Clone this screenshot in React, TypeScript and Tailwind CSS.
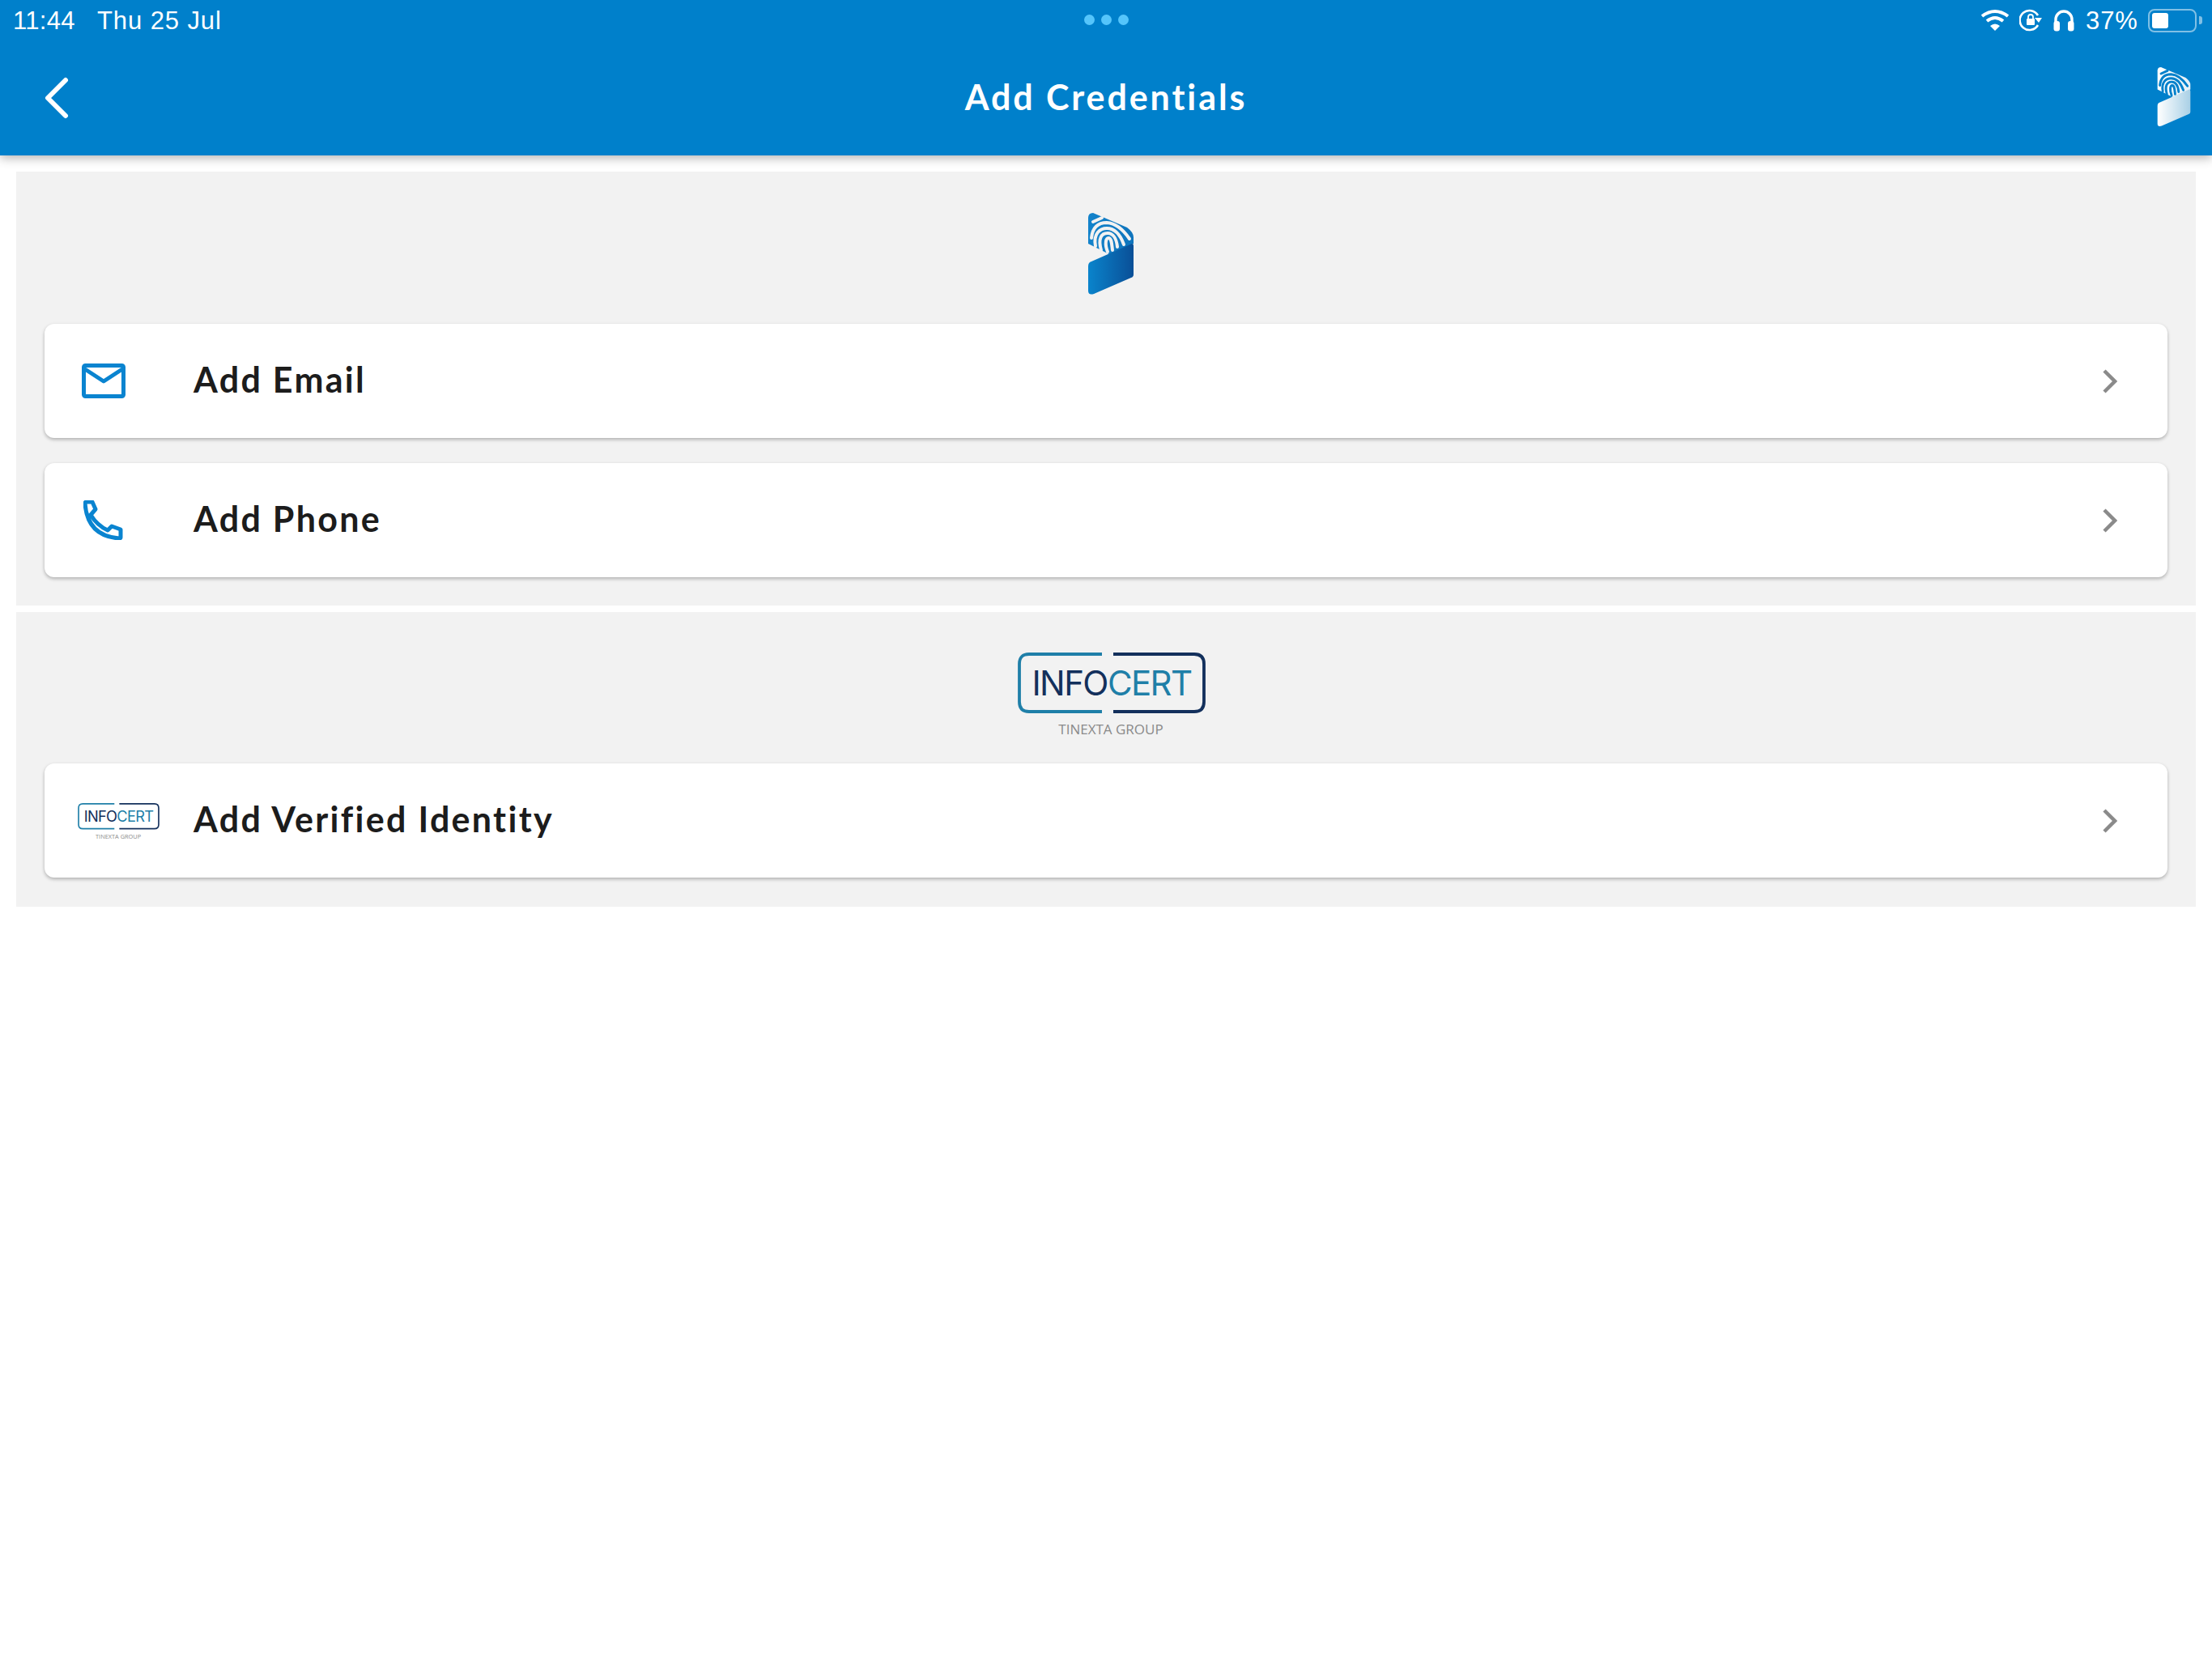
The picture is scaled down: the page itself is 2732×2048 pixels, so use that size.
import React from "react";

function Print({ id, top, bottom, lines, className }: { id: string; top: [string, string]; bottom: [string, string]; lines: string; className: string }) {
  return (
    <svg viewBox="0 0 56 102" className={className}>
      <defs>
        <linearGradient id={id + "a"} x1="0" y1="0" x2="1" y2="0">
          <stop offset="0" stopColor={top[0]} />
          <stop offset="1" stopColor={top[1]} />
        </linearGradient>
        <linearGradient id={id + "b"} x1="0" y1="0" x2="1" y2="0">
          <stop offset="0" stopColor={bottom[0]} />
          <stop offset="1" stopColor={bottom[1]} />
        </linearGradient>
      </defs>
      <path d="M0 6 Q0 0 6 0 L48 18 Q56 24 56 30 V38 L26 51 L0 38 Z" fill={`url(#${id}a)`} />
      <path d="M0 66 Q0 61 4 60 L54 38 Q56 38 56 41 V76 Q56 79 53 80 L7 100 Q0 102 0 96 Z" fill={`url(#${id}b)`} />
      <g fill="none" stroke={lines} strokeWidth="4" strokeLinecap="round">
        <path d="M6 11 L17 6" />
        <path d="M4 31 Q6 12 23 12 Q38 13 51 32" />
        <path d="M9 41 C6 25 15 19 23 19 C33 19 40 28 44 39" />
        <path d="M16 46 C12 32 16 25 24 25 C31 25 35 32 36 42" />
        <path d="M24 48 C20 38 22 31 25 31 C29 31 29 38 30 46" />
      </g>
    </svg>
  );
}

function Infocert({ className }: { className: string }) {
  return (
    <svg viewBox="0 0 232 106" className={className}>
      <path d="M104 2 H14 Q2 2 2 14 V61 Q2 73 14 73 H104" fill="none" stroke="#1f7fa8" strokeWidth="3.8" />
      <path d="M118 2 H218 Q230 2 230 14 V61 Q230 73 218 73 H118" fill="none" stroke="#13305c" strokeWidth="3.8" />
      <text x="116" y="53" textAnchor="middle" fontFamily="Inter, sans-serif" fontSize="42" letterSpacing="-1.6" fill="#13305c">
        INFO<tspan fill="#1f7fa8">CERT</tspan>
      </text>
      <text x="115" y="101" textAnchor="middle" fontFamily="'Open Sans', sans-serif" fontSize="17" fill="#8a8a8a">
        TINEXTA GROUP
      </text>
    </svg>
  );
}

function Chevron() {
  return (
    <svg viewBox="0 0 18 30" className="w-[18px] h-[30px]" fill="none" stroke="#8a8a8a" strokeWidth="4.5">
      <path d="M2 2 L15 15 L2 28" />
    </svg>
  );
}

function Row({ icon, label }: { icon: React.ReactNode; label: string }) {
  return (
    <div className="h-[141px] flex items-center bg-white rounded-[12px] shadow-[0_2px_4px_rgba(0,0,0,0.28)]">
      <div className="w-[184px] shrink-0 pl-[40px] flex items-center">{icon}</div>
      <span className="flex-1 font-['Lato',sans-serif] font-bold text-[43px] tracking-[2.3px] text-[#1c1c1c] -translate-y-[1px]">{label}</span>
      <div className="pr-[62px] flex items-center"><Chevron /></div>
    </div>
  );
}

export default function App() {
  return (
    <div className="min-h-[2048px] bg-white font-['Liberation_Sans',sans-serif]">
      <header className="h-[192px] bg-[#0080cb] text-white shadow-[0_3px_12px_rgba(0,0,0,0.3)] relative">
        <div className="h-[50px] flex items-center pl-[16px] pr-[12px] text-[31px] tracking-[0.9px]">
          <span className="w-[104px] tracking-[0.3px] translate-y-[1px]">11:44</span>
          <span className="flex-1 translate-y-[1px]">Thu 25 Jul</span>
          <div className="absolute left-[1339px] top-[18px] flex gap-[8px]">
            <span className="w-[13px] h-[13px] rounded-full bg-[#55c5fb]" />
            <span className="w-[13px] h-[13px] rounded-full bg-[#55c5fb]" />
            <span className="w-[13px] h-[13px] rounded-full bg-[#55c5fb]" />
          </div>
          <svg viewBox="0 0 36 28" className="w-[36px] h-[28px] mr-[12px]" fill="none" stroke="white" strokeWidth="4">
            <path d="M2 9 Q18 -3 34 9" />
            <path d="M8 15 Q18 7 28 15" />
            <path d="M18 27 L12 21 Q18 16 24 21 Z" fill="white" stroke="none" />
          </svg>
          <svg viewBox="0 0 28 28" className="w-[28px] h-[28px] mr-[14px]" fill="none" stroke="white" strokeWidth="2.6">
            <path d="M23 8 A12 12 0 1 0 23 20" />
            <path d="M19 11 L28 11 L24 17 Z" fill="white" stroke="none" />
            <rect x="9" y="12" width="10" height="8" rx="1" fill="white" stroke="none" />
            <path d="M11 12 V10 A3 3 0 0 1 17 10 V12" strokeWidth="1.8" />
          </svg>
          <svg viewBox="0 0 26 28" className="w-[26px] h-[28px] mr-[14px]" fill="none" stroke="white" strokeWidth="3.4">
            <path d="M3 19 V13 A10 10 0 0 1 23 13 V19" />
            <rect x="0.5" y="15" width="7.5" height="12.5" rx="3" fill="white" stroke="none" />
            <rect x="18" y="15" width="7.5" height="12.5" rx="3" fill="white" stroke="none" />
          </svg>
          <span className="w-[77px] translate-y-[1px]">37%</span>
          <div className="w-[60px] h-[29px] rounded-[8px] border-[2px] border-white/50 p-[3px]">
            <div className="w-[20px] h-full rounded-[3px] bg-white" />
          </div>
          <span className="ml-[3px] w-[4px] h-[10px] rounded-r-[3px] bg-white/50" />
        </div>
        <div className="h-[142px] flex items-center justify-between pl-[54px] pr-[25px] relative">
          <svg viewBox="0 0 32 52" className="w-[32px] h-[52px]" fill="none" stroke="white" strokeWidth="6" strokeLinecap="round" strokeLinejoin="round">
            <path d="M27 4 L5 26 L27 48" />
          </svg>
          <h1 className="absolute inset-x-0 text-center font-['Lato',sans-serif] font-bold text-[43px] tracking-[2.9px] -translate-y-[1px]">Add Credentials</h1>
          <Print id="h" top={["#ffffff", "#e4eff6"]} bottom={["#ffffff", "#a9d0e6"]} lines="#0080cb" className="w-[44px] h-[74px] -translate-y-[1px]" />
        </div>
      </header>
      <main className="px-[20px] pt-[20px] flex flex-col gap-[8px]">
        <section className="bg-[#f2f2f2] h-[536px] px-[35px] flex flex-col">
          <div className="h-[188px] flex justify-center pt-[51px] pl-[12px]">
            <Print id="m" top={["#1383cb", "#0f74bc"]} bottom={["#0a84cc", "#0a4f97"]} lines="#f2f2f2" className="w-[56px] h-[102px]" />
          </div>
          <div className="flex flex-col gap-[31px]">
            <Row
              label="Add Email"
              icon={
                <svg viewBox="0 0 54 43" className="w-[54px] h-[43px] ml-[6px]" fill="none" stroke="#0a84d0" strokeWidth="5" strokeLinejoin="round">
                  <rect x="2.5" y="2.5" width="49" height="38" rx="2" />
                  <path d="M4 7 L27 22 L50 7" />
                </svg>
              }
            />
            <Row
              label="Add Phone"
              icon={
                <svg viewBox="0 0 49 49" className="w-[49px] h-[49px] ml-[8px]" fill="none" stroke="#0a84d0" strokeWidth="5" strokeLinejoin="round">
                  <path d="M2 4 Q2 2 4 2 H11 L15 11 L9 18 Q17 31 30 37 L35 32 L46 36 V46 Q46 47 44 47 Q5 44 2 4 Z" />
                </svg>
              }
            />
          </div>
        </section>
        <section className="bg-[#f2f2f2] h-[364px] px-[35px] flex flex-col">
          <div className="h-[187px] flex justify-center pt-[50px] pl-[14px]">
            <Infocert className="w-[232px] h-[106px]" />
          </div>
          <Row label="Add Verified Identity" icon={<Infocert className="w-[101px] h-[46px] ml-[1px] translate-y-[1px]" />} />
        </section>
      </main>
    </div>
  );
}
